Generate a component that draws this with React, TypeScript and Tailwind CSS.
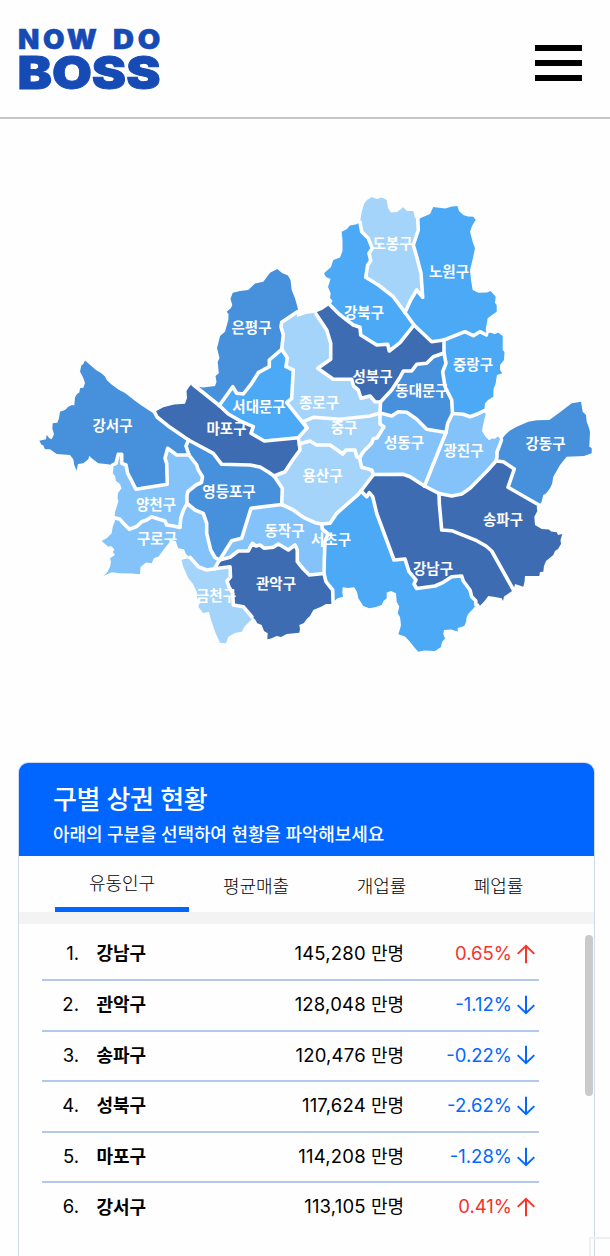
import React from "react";

// Borders shared by two districts, drawn once as white lines and reused for both fills.
const BORDERS: Record<string, string> = {
  gangseoMapo: "154.5,412 157,417 170,427.3 188.5,440",
  gangseoYangcheon:
    "112.5,465 116,463.3 118.3,454.3 121.7,454.3 121.7,463.3 126,465 127.7,473.3 136,489.3 167.3,484.3 166.7,463.3 165,458.3 167.7,448.3 176.7,455 189,455",
  gangseoYdp: "188.5,440 186,446 189,455",
  yangcheonYdp: "189,455 196.7,465 198.3,470 202.5,476.7 201.5,482.5 196,485 188,491.5 187,495 187,503.5",
  yangcheonGuro:
    "187,503.5 183.5,510 180.7,518.3 180,527.5 173.3,526 166.7,525 165,521 158.5,519 151.7,516.7 146.7,520 141.7,521.7 136.7,526.5 129.3,529.3 123.3,523.3 120,519.3 114.5,517.7",
  guroYdp: "187,503.5 195,510 203.3,513.3 206.7,523.3 206.7,533.3 210.7,550 215,557.5 219.5,560",
  guroGwanak: "219.5,560 214.5,568.7",
  guroGeumcheon: "190,557.3 198.3,566.7 206.7,570 214.5,568.7",
  ydpDongjak: "219.5,560 231.7,540.7 241.7,538.3 251,508.3 281.7,504.5",
  dongjakGwanak:
    "219.5,560 230,557.3 238.3,551 248.3,551 252.3,543.3 256,546 260,545 264.3,548.3 273.3,547.3 278.3,544 288.3,550 295,545 297.3,550 297.3,561.7 303.3,569 309.3,575 324,573.5",
  dongjakSeocho: "324,573.5 324.3,560 325,541 328.3,534 322.3,529 321.7,524",
  yongsanDongjak: "281.7,504.5 293.3,510 303.3,517.3 315,522.7 321.7,524",
  yongsanYdp: "281.7,504.5 282.3,488.3 274,476",
  yongsanSeocho: "321.7,524 330,523.3 336.7,513.3 358.3,494.3 361,491",
  yongsanGangnam: "361,491 373.5,474.5",
  yongsanSeongdong: "373.5,474.5 371.7,470 361.7,467.3 359.5,458",
  seongdongJung: "359.5,458 363.3,451.7 371.7,443.3 373.5,438.5 377,438 384,426.7 380,424 380,413",
  jongnoDdm: "380.5,402 380,413",
  seongdongDdm: "380,413 391.7,416 398.3,411.7 406.7,412.3 416.7,419.3 426.7,429.3 446,432.5",
  seongdongGwangjin: "446,432.5 424.5,486",
  seongdongGangnam: "373.5,474.5 403.3,474.3 410,476.7 424.5,486",
  gwangjinDdm: "446,432.5 447.7,423.3 452.5,413.5",
  gwangjinJungnang: "452.5,413.5 463.3,414.3 470,416.7 476.7,414.3 483.5,411",
  gwangjinGangdong: "501.5,440 499,447 497,452 497,457 496,461",
  gwangjinSongpa: "496,461 488,470 470,488.3 461.7,494 451.7,496 439,493.5",
  gwangjinGangnam: "424.5,486 439,493.5",
  songpaGangnam: "439,493.5 439.3,503.3 441.7,530 451.7,530.7 476.7,540.7 486,546 491.7,551 513.5,590",
  songpaGangdong: "496,461 503.3,461.7 514.3,469 508,487.3 539,505",
  gangnamSeocho:
    "361,491 366.7,496.7 369.3,492.7 372.7,496.7 376.7,513.3 394,560 405,559 409,571.7 416,580 414,584 416.7,588.5 435,586 443.3,582.3 451.7,576.7 461.7,576 463.3,581 470,590 471.7,596.7 475.7,600.7 476,605",
  seochoGwanak: "324,573.5 326,581.7 332.7,590 333,602",
  geumcheonGwanak:
    "214.5,568.7 230,566.7 230.5,577 227,581 229,587 232.7,593.3 233.3,605 243.3,606.7 252,617",
  mapoEunpyeong: "193,384.5 219.3,405.5",
  mapoSdm: "219.3,405.5 228.3,414 241.7,421.7 253.3,426.7 251,433.3 264.3,441 298.3,437.7",
  mapoJung: "298.3,437.7 299.5,445",
  mapoYongsan: "299.5,445 300,450 292.7,460 285,471.7 274,476",
  mapoYdp: "188.5,440 213.3,453.3 221.7,464.3 250,465 260,467 268.3,472 274,476",
  eunpyeongJongno: "297,312 281.7,322.3 281,326.7 283.3,335 281.7,349.3",
  eunpyeongSdm:
    "281.7,349.3 269.3,360 269.3,366.7 258.3,372.7 251.7,383.3 243.3,394 236.7,393.3 232.7,386.7 219.3,405.5",
  sdmJongno: "281.7,349.3 287.3,357.7 286,366.7 293.3,370 291.7,398.3 286.7,402.7 307,428",
  sdmJung: "307,428 298.3,437.7",
  jongnoSeongbuk:
    "316,314 320,320 326.7,330 330.7,343.3 330.7,359.3 317.7,368.3 333.3,379.3 351.7,379.3 353.5,386 358.3,390 361,398.3 370,396 375,401.7 380.5,402",
  jongnoJung: "307,428 303.3,421.7 313.3,417.3 340,419.3 370,416 380,413",
  jungYongsan:
    "299.5,445 301.7,443.3 310,441 316.7,445 330,445 338.3,450.7 342.7,454 346,450 355,450 356.7,456.7 359.5,458",
  seongbukGangbuk:
    "330,305 338.3,313.3 346.7,320 353.3,325 360,327.3 360.7,335 376.7,345 387.7,344.3 389.3,351 400,342.7 414,325",
  seongbukNowon: "414,325 431.7,341.7 444,340",
  seongbukJungnang: "444,340 444,353",
  seongbukDdm:
    "380.5,402 391.7,390 400,377.3 403.3,371 411.7,371 416.7,364.3 426.7,363.3 433.3,356.7 444,353",
  ddmJungnang: "444,353 446,363.3 442.7,371.7 445,386.7 451.7,400 452.5,413.5",
  nowonJungnang: "444,340 465,331.7 473.3,335.7 480,331.7 486.5,335",
  dobongNowon: "417.7,217 418.3,230 413.3,245 416.7,256.7 421,273.3 422.7,297.3 416.7,290 410.7,300 405,312.5",
  gangbukNowon: "405,312.5 414,325",
  dobongGangbuk:
    "360,222 361.7,231.7 368.3,238.3 372.3,248.3 369,253.3 370.7,260.7 367.7,265 365.7,277.3 378.3,285 393.3,296.7 405,312.5",
};

// Stretches of the city's outline, one for each district that touches it.
const COAST: Record<string, string> = {
  gangseo:
    "154.5,414 148.3,410 140,404.5 133.3,399.5 125,393 118.3,389.5 111,384 106.7,380 105,376.5 101.7,373.5 96,370 85,360.5 83,364.5 81.5,365 80,371.5 83.3,378 85,383 83.3,387.7 80,388.3 79.3,392.5 77,394 75,397.3 74.3,405.5 72,405 68.3,406.7 65,410 60,411.7 59,418.3 57.3,422.7 52.7,423.3 52.3,428.3 54,434.3 51.7,439.3 49,438 46.7,434.7 46,439.3 39.3,440.7 41.7,445 43,445 45,449.3 50,449.3 56.7,454 70,455 73.3,459.3 74.3,465 76.5,470.5 78,464 83.3,463.3 88.3,459.3 89.3,455.7 91.7,458.3 98.3,463.3 106,464 112.5,465",
  yangcheon:
    "112.5,465 113.5,468 112.8,473.3 115,476 116,481 120,484 121.5,488.3 118,493 117.5,498 118.5,501 116.7,506.7 115,512 114.5,517.7",
  guro: "114.5,519 115,521 112.7,526.7 111.7,533.3 107,538 101.7,541 108.3,546.7 111,546 114.3,549.3 113,552 115,555 110,558.3 111,562 110,566.7 107.3,572.3 103.3,576 111.7,572.3 120,573.3 131,573.5 140,574.3 140.5,567 146,562.5 151.7,563.3 154,558 158.3,556.7 163.3,550 168,544 171.7,540 175.7,541 178.3,548.3 184,549.3 186,554.3 190,557.3",
  geumcheon:
    "190,559 186,558.5 181.5,560 183,566 188.3,578.3 193,584 196.7,591.7 197,598 200,602 198.3,606.7 203.3,613.3 209,611.7 210.5,618 213.3,626.7 216,634 220,642.7 226,643.3 228.3,636.7 235,633 241.7,631.7 245,626 251.5,619.5",
  gwanak:
    "333,602 330.7,604 326,604 321.7,606.5 313.3,610 310,616 306.7,619 304,623 299.3,625 300,629 299.3,632.7 286.7,634 281,637 276.7,636 271,638.5 267.3,639.3 267.7,633.3 264,631 261.7,625 257.3,623.3 255,619.3 252,617",
  seocho:
    "476,605 473,609 469,613 466.7,616.7 466,622 464.3,626 457.7,628 457.7,631.5 451,629.5 444,630 443.3,634 445,638.5 442,642 441,647 435,651 424,650.5 418.3,651.7 414,647 410,641.7 405,636.5 398.3,634.3 400,629 401,625 400,617 397.7,613.3 399.3,606.7 396.7,601.7 396,593.3 391,591 386.7,592.5 386.7,598.3 383.5,601 381.7,605 376,607 369.3,608.3 363.3,606 358.3,598.3 357,592 354.3,587.3 348,588 342.7,587.3 342.3,592.5 343,597 338,598 333,602",
  gangnam:
    "513.5,590 510,592.5 504,596.5 503,601 501.7,598.3 495,597 488.3,596 485,600.5 480,605.7 478.5,603.3 476,605",
  songpa:
    "539,505 536.7,506.7 537.3,511 534.3,516.7 535,525 541.7,529 549,529.5 551,531.5 556.7,532.3 558,535 562.3,534 560.5,540 561,544 558,549 555,551 553.3,555 546,561 544,566 543.3,571.7 540,572 539.3,576 525,576 524.5,582 523.3,586.7 515,584 513.5,590",
  gangdong:
    "501.5,440 505,435 510,430.5 516.7,426.7 528.3,421.7 537,420.3 549.3,420 559,413 571.7,403.3 581,401.7 582.7,411.7 586,415 586.7,421.7 589,428 590,431.7 589.3,446.7 591.7,448 591.7,453.3 584,456 566.7,456.7 564,460 560,465 553.3,476.7 552,484 550,488.3 546,493.5 543.3,495 541.5,502 539,505",
  gwangjin:
    "483.5,411 485.7,414.3 484,421 482.7,426.7 482,431 485,436 489,440.3 492,438.5 495,438.7 498,436.5 501.5,440",
  jungnang:
    "486.5,335 490,332.5 495,334.3 498,332.5 502.7,336 502.7,350 504.5,352 504,360 500,365 500,370 502.3,373.3 497,375 495.5,384 493.5,389 493.3,396.7 488,400 485,403.3 484.5,408 483.5,411",
  nowon:
    "486.5,335 485.7,329.3 487.7,318.3 492,315 496.7,311.7 496.7,305 495,303 495.7,296.7 490.7,291 487,292.5 478.3,292.7 472.7,290 471,280 470,270 473,258 475,248.3 473,243 470,231.7 472,226 475.7,220 473.3,216.7 468,216.5 463.3,215 459,211 457.3,206 452,206.5 445,208.5 433.3,207 430,214 420,218.3 417.7,221",
  dobong:
    "360,222 361.7,211.7 364.3,203.3 367,200 371.7,197 377,199 382,197.5 386.7,200 388,208 391,212.5 397,212 403.3,207.3 407,211 413.3,211 415,218 417.7,219",
  gangbuk:
    "360,222 356.7,224.3 350,225.5 347,229 341.7,231.7 342.5,240 342.5,251 340,257.5 333.3,260 331,267 324,273.3 326,277 330.5,279 328,287 330.7,293.3 330,298 332.7,301 330,305",
  seongbuk: "316,314 317,312 322,310 328.3,305.7 330,305",
  jongno: "297,317 306,314 316,312.5",
  eunpyeong:
    "193,384.5 198.3,386.7 203.3,387.5 215,386 216.5,382 215.5,376 218.8,373.3 217.7,361.7 219.5,358 217,348 218.3,343.3 220,336 225,331.7 228.3,320 228.5,314 226.7,311.7 231,308 232.3,305 230.5,299 232.7,292.7 240,291 248.3,290 255,283.5 263.3,281.7 270,272.7 277.3,269 282,273 288,275.5 290.5,280 291.7,290 295,298.3 298,309 297,312",
  mapo: "154.5,412 163.3,407.3 174,404.5 185,403.8 187,398 186.5,391 189,387 191.7,384 193,384.5",
};

// Each ring lists its pieces in walking order; "~" walks a piece backwards, "@" takes it from COAST.
type District = { name: string; x: number; y: number; color: string; ring: string };

const NAVY = "#3e6cb3";
const BLUE = "#4790db";
const AZURE = "#4ca9f6";
const SKY = "#83c3f9";
const PALE = "#a5d4fa";

const DISTRICTS: District[] = [
  { name: "강서구", x: 112.5, y: 425.5, color: BLUE, ring: "@gangseo gangseoYangcheon ~gangseoYdp ~gangseoMapo" },
  { name: "양천구", x: 156, y: 505, color: SKY, ring: "gangseoYangcheon yangcheonYdp yangcheonGuro ~@yangcheon" },
  { name: "구로구", x: 157, y: 538.5, color: SKY, ring: "@guro guroGeumcheon ~guroGwanak ~guroYdp yangcheonGuro" },
  { name: "금천구", x: 216, y: 596, color: PALE, ring: "guroGeumcheon geumcheonGwanak ~@geumcheon" },
  { name: "관악구", x: 276, y: 584, color: NAVY, ring: "~guroGwanak dongjakGwanak seochoGwanak @gwanak ~geumcheonGwanak" },
  { name: "영등포구", x: 229, y: 491.5, color: BLUE, ring: "gangseoYdp yangcheonYdp guroYdp ydpDongjak yongsanYdp ~mapoYdp" },
  { name: "동작구", x: 284.5, y: 531, color: SKY, ring: "ydpDongjak yongsanDongjak ~dongjakSeocho ~dongjakGwanak" },
  { name: "마포구", x: 226.5, y: 428.5, color: NAVY, ring: "@mapo mapoEunpyeong mapoSdm mapoJung mapoYongsan ~mapoYdp ~gangseoMapo" },
  { name: "은평구", x: 251.5, y: 327.5, color: BLUE, ring: "@eunpyeong eunpyeongJongno eunpyeongSdm ~mapoEunpyeong" },
  { name: "서대문구", x: 259, y: 406.5, color: AZURE, ring: "sdmJongno sdmJung ~mapoSdm ~eunpyeongSdm" },
  { name: "종로구", x: 319, y: 402.5, color: PALE, ring: "@jongno jongnoSeongbuk jongnoDdm ~jongnoJung ~sdmJongno ~eunpyeongJongno" },
  { name: "중구", x: 344, y: 428, color: PALE, ring: "jongnoJung ~seongdongJung ~jungYongsan ~mapoJung ~sdmJung" },
  { name: "용산구", x: 322.5, y: 476, color: PALE, ring: "jungYongsan ~yongsanSeongdong ~yongsanGangnam ~yongsanSeocho ~yongsanDongjak yongsanYdp ~mapoYongsan" },
  { name: "성동구", x: 404, y: 443, color: SKY, ring: "seongdongDdm seongdongGwangjin ~seongdongGangnam yongsanSeongdong seongdongJung" },
  { name: "광진구", x: 463.5, y: 451, color: SKY, ring: "gwangjinDdm gwangjinJungnang @gwangjin gwangjinGangdong gwangjinSongpa ~gwangjinGangnam ~seongdongGwangjin" },
  { name: "동대문구", x: 422, y: 391, color: BLUE, ring: "seongbukDdm ddmJungnang ~gwangjinDdm ~seongdongDdm ~jongnoDdm" },
  { name: "중랑구", x: 473, y: 365, color: AZURE, ring: "nowonJungnang @jungnang ~gwangjinJungnang ~ddmJungnang ~seongbukJungnang" },
  { name: "성북구", x: 372.5, y: 377, color: NAVY, ring: "@seongbuk seongbukGangbuk seongbukNowon seongbukJungnang ~seongbukDdm ~jongnoSeongbuk" },
  { name: "강북구", x: 364, y: 313, color: AZURE, ring: "dobongGangbuk gangbukNowon ~seongbukGangbuk ~@gangbuk" },
  { name: "도봉구", x: 392.5, y: 244, color: PALE, ring: "@dobong dobongNowon ~dobongGangbuk" },
  { name: "노원구", x: 449, y: 272, color: AZURE, ring: "dobongNowon gangbukNowon seongbukNowon nowonJungnang @nowon" },
  { name: "강동구", x: 545.5, y: 444, color: BLUE, ring: "@gangdong ~songpaGangdong ~gwangjinGangdong" },
  { name: "송파구", x: 503, y: 520, color: NAVY, ring: "songpaGangdong @songpa ~songpaGangnam ~gwangjinSongpa" },
  { name: "서초구", x: 331, y: 540, color: AZURE, ring: "yongsanSeocho gangnamSeocho @seocho ~seochoGwanak dongjakSeocho" },
  { name: "강남구", x: 433, y: 569, color: NAVY, ring: "yongsanGangnam seongdongGangnam gwangjinGangnam songpaGangnam @gangnam ~gangnamSeocho" },
];

function ringPoints(ring: string): string {
  return ring
    .split(" ")
    .map((piece) => {
      const backwards = piece.startsWith("~");
      const key = backwards ? piece.slice(1) : piece;
      const points = key.startsWith("@") ? COAST[key.slice(1)] : BORDERS[key];
      return backwards ? points.split(" ").reverse().join(" ") : points;
    })
    .join(" ");
}

function SeoulMap() {
  return (
    <svg viewBox="0 119 610 643" className="block h-[643px] w-[610px] shrink-0">
      {DISTRICTS.map((d) => (
        <polygon key={d.name} points={ringPoints(d.ring)} fill={d.color} />
      ))}
      {Object.entries(BORDERS).map(([key, points]) => (
        <polyline
          key={key}
          points={points}
          fill="none"
          stroke="#fefefe"
          strokeWidth="3.6"
          strokeLinejoin="round"
          strokeLinecap="round"
        />
      ))}
      {DISTRICTS.map((d) => (
        <text
          key={d.name}
          x={d.x}
          y={d.y + 5}
          textAnchor="middle"
          className="fill-white font-['Noto_Sans_CJK_KR',sans-serif] text-[14.5px] font-bold"
        >
          {d.name}
        </text>
      ))}
    </svg>
  );
}

function Logo() {
  return (
    <svg
      viewBox="0 0 150 84"
      className="h-[84px] w-[150px] fill-[#164ab4] stroke-[#164ab4] font-['Inter',sans-serif] font-black"
    >
      <text x="0" y="35" fontSize="26.5" strokeWidth="0.5" letterSpacing="3.4" textLength="82.5" lengthAdjust="spacingAndGlyphs">
        NOW
      </text>
      <text x="95" y="35" fontSize="26.5" strokeWidth="0.5" letterSpacing="3.4" textLength="51" lengthAdjust="spacingAndGlyphs">
        DO
      </text>
      <text x="-0.5" y="75" fontSize="45" strokeWidth="0.9" textLength="143" lengthAdjust="spacingAndGlyphs">
        BOSS
      </text>
    </svg>
  );
}

function Arrow({ up }: { up: boolean }) {
  return (
    <svg viewBox="0 0 18 20" fill="none" stroke="currentColor" strokeWidth="2" className="h-5 w-[18px]">
      <path d={up ? "M9 19.3V1.8M0.7 9.9 9 1.8l8.3 8.1" : "M9 0.7v17.5M0.7 10.1 9 18.2l8.3-8.1"} />
    </svg>
  );
}

const ROWS = [
  { name: "강남구", value: "145,280", rate: "0.65%" },
  { name: "관악구", value: "128,048", rate: "-1.12%" },
  { name: "송파구", value: "120,476", rate: "-0.22%" },
  { name: "성북구", value: "117,624", rate: "-2.62%" },
  { name: "마포구", value: "114,208", rate: "-1.28%" },
  { name: "강서구", value: "113,105", rate: "0.41%" },
];

export default function App() {
  return (
    <div className="relative flex h-[1256px] w-[610px] flex-col overflow-hidden bg-[#fefefe] font-['Inter','Noto_Sans_CJK_KR',sans-serif] text-black">
      <header className="flex h-[119px] shrink-0 items-start justify-between border-b-2 border-[#c5c5c5] pt-[14px] pr-7 pl-[18px]">
        <Logo />
        <button aria-label="메뉴" className="mt-[31px] flex w-[47px] flex-col gap-[9px]">
          <span className="h-1.5 bg-black" />
          <span className="h-1.5 bg-black" />
          <span className="h-1.5 bg-black" />
        </button>
      </header>

      <SeoulMap />

      <section className="mr-[15px] ml-[18px] flex h-[520px] shrink-0 flex-col overflow-hidden rounded-t-[10px] border border-[#cfdcef]">
        <div className="h-[93px] shrink-0 bg-[#0066ff] pl-[34px] text-white">
          <h1 className="pt-[19px] text-[26px] leading-9 font-medium tracking-[-0.4px]">구별 상권 현황</h1>
          <p className="pt-[3px] text-[18px] leading-7 font-medium tracking-[-0.12px]">
            아래의 구분을 선택하여 현황을 파악해보세요
          </p>
        </div>
        <nav className="flex h-14 shrink-0 pl-9 text-[18px] leading-6 font-light">
          <span className="flex w-[134px] justify-center border-b-[5px] border-[#0066ff] pt-4">유동인구</span>
          <span className="flex w-[134px] justify-center pt-[19px]">평균매출</span>
          <span className="flex w-[117px] justify-center pt-[19px]">개업률</span>
          <span className="flex w-[117px] justify-center pt-[19px]">폐업률</span>
        </nav>
        <div className="h-3 shrink-0 bg-[#f3f3f3]" />
        <div className="flex justify-between">
          <ol className="ml-[23px] w-[497px] pt-[6.4px] text-[18px]">
            {ROWS.map((row, i) => {
              const up = !row.rate.startsWith("-");
              return (
                <li
                  key={row.name}
                  className="flex h-[50.6px] items-center border-b-2 border-[#b3c8ec] pr-1 pb-px first:pb-[2px] last:border-b-0 last:pb-[3px]"
                >
                  <span className="w-[37px] text-right text-[18.5px]">{i + 1}.</span>
                  <span className="ml-[17.5px] font-bold">{row.name}</span>
                  <span className="ml-auto">
                    <span className="text-[18.5px] tracking-[0.2px]">{row.value}</span> 만명
                  </span>
                  <span
                    className={
                      up
                        ? "flex w-[131px] items-center justify-end gap-[5px] text-[18.5px] text-[#f5342a]"
                        : "flex w-[131px] items-center justify-end gap-[5px] text-[18.5px] text-[#0468ff]"
                    }
                  >
                    {row.rate}
                    <Arrow up={up} />
                  </span>
                </li>
              );
            })}
          </ol>
          <div className="mt-[11px] mr-px h-[161px] w-2 rounded-full bg-[#cacaca]" />
        </div>
      </section>

      <div className="absolute right-0 bottom-0 h-[19px] w-[21px] border-t-2 border-l-2 border-[#efeff1]" />
    </div>
  );
}
